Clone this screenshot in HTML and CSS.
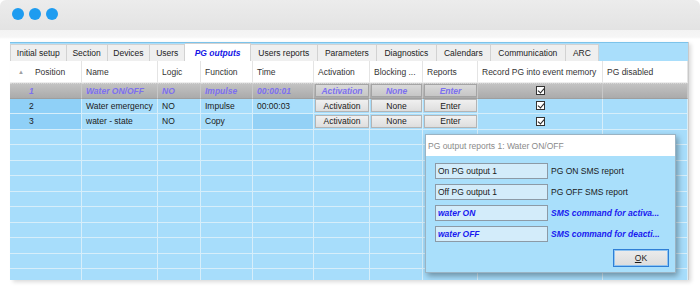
FILE: index.html
```html
<!DOCTYPE html>
<html lang="en">
<head>
  <meta charset="UTF-8" />
  <title>PG outputs</title>
  <link rel="stylesheet" href="styles.css">
</head>
<body>
  <div class="window">
    <div class="titlebar">
      <span class="dot"></span>
      <span class="dot"></span>
      <span class="dot"></span>
    </div>

    <div class="frame">
      <div class="panel">
        <div class="tabs">
          <span class="tab narrow">Initial setup</span>
          <span class="tab narrow">Section</span>
          <span class="tab narrow">Devices</span>
          <span class="tab narrow">Users</span>
          <span class="tab active">PG outputs</span>
          <span class="tab">Users reports</span>
          <span class="tab">Parameters</span>
          <span class="tab">Diagnostics</span>
          <span class="tab">Calendars</span>
          <span class="tab">Communication</span>
          <span class="tab">ARC</span>
        </div>

        <div class="grid">
          <div class="row head">
            <div class="cell pos"><span class="sort">▲</span>Position</div>
            <div class="cell">Name</div>
            <div class="cell">Logic</div>
            <div class="cell">Function</div>
            <div class="cell">Time</div>
            <div class="cell">Activation</div>
            <div class="cell">Blocking ...</div>
            <div class="cell">Reports</div>
            <div class="cell">Record PG into event memory</div>
            <div class="cell">PG disabled</div>
          </div>

          <div class="row selected">
            <div class="cell pos">1</div>
            <div class="cell">Water ON/OFF</div>
            <div class="cell">NO</div>
            <div class="cell">Impulse</div>
            <div class="cell">00:00:01</div>
            <div class="cell"><span class="btn">Activation</span></div>
            <div class="cell"><span class="btn">None</span></div>
            <div class="cell"><span class="btn">Enter</span></div>
            <div class="cell center"><span class="check"></span></div>
            <div class="cell"></div>
          </div>

          <div class="row">
            <div class="cell pos">2</div>
            <div class="cell">Water emergency</div>
            <div class="cell">NO</div>
            <div class="cell">Impulse</div>
            <div class="cell">00:00:03</div>
            <div class="cell"><span class="btn">Activation</span></div>
            <div class="cell"><span class="btn">None</span></div>
            <div class="cell"><span class="btn">Enter</span></div>
            <div class="cell center"><span class="check"></span></div>
            <div class="cell"></div>
          </div>

          <div class="row">
            <div class="cell pos">3</div>
            <div class="cell">water - state</div>
            <div class="cell">NO</div>
            <div class="cell">Copy</div>
            <div class="cell disabled"></div>
            <div class="cell"><span class="btn">Activation</span></div>
            <div class="cell"><span class="btn">None</span></div>
            <div class="cell"><span class="btn">Enter</span></div>
            <div class="cell center"><span class="check"></span></div>
            <div class="cell"></div>
          </div>

          <div class="row empty"><div class="cell"></div><div class="cell"></div><div class="cell"></div><div class="cell"></div><div class="cell"></div><div class="cell"></div><div class="cell"></div><div class="cell"></div><div class="cell"></div><div class="cell"></div></div>
          <div class="row empty"><div class="cell"></div><div class="cell"></div><div class="cell"></div><div class="cell"></div><div class="cell"></div><div class="cell"></div><div class="cell"></div><div class="cell"></div><div class="cell"></div><div class="cell"></div></div>
          <div class="row empty"><div class="cell"></div><div class="cell"></div><div class="cell"></div><div class="cell"></div><div class="cell"></div><div class="cell"></div><div class="cell"></div><div class="cell"></div><div class="cell"></div><div class="cell"></div></div>
          <div class="row empty"><div class="cell"></div><div class="cell"></div><div class="cell"></div><div class="cell"></div><div class="cell"></div><div class="cell"></div><div class="cell"></div><div class="cell"></div><div class="cell"></div><div class="cell"></div></div>
          <div class="row empty"><div class="cell"></div><div class="cell"></div><div class="cell"></div><div class="cell"></div><div class="cell"></div><div class="cell"></div><div class="cell"></div><div class="cell"></div><div class="cell"></div><div class="cell"></div></div>
          <div class="row empty"><div class="cell"></div><div class="cell"></div><div class="cell"></div><div class="cell"></div><div class="cell"></div><div class="cell"></div><div class="cell"></div><div class="cell"></div><div class="cell"></div><div class="cell"></div></div>
          <div class="row empty"><div class="cell"></div><div class="cell"></div><div class="cell"></div><div class="cell"></div><div class="cell"></div><div class="cell"></div><div class="cell"></div><div class="cell"></div><div class="cell"></div><div class="cell"></div></div>
          <div class="row empty"><div class="cell"></div><div class="cell"></div><div class="cell"></div><div class="cell"></div><div class="cell"></div><div class="cell"></div><div class="cell"></div><div class="cell"></div><div class="cell"></div><div class="cell"></div></div>
          <div class="row empty"><div class="cell"></div><div class="cell"></div><div class="cell"></div><div class="cell"></div><div class="cell"></div><div class="cell"></div><div class="cell"></div><div class="cell"></div><div class="cell"></div><div class="cell"></div></div>
          <div class="row empty"><div class="cell"></div><div class="cell"></div><div class="cell"></div><div class="cell"></div><div class="cell"></div><div class="cell"></div><div class="cell"></div><div class="cell"></div><div class="cell"></div><div class="cell"></div></div>
        </div>

        <div class="dialog">
          <div class="dialog-title">PG output reports 1: Water ON/OFF</div>
          <div class="dialog-body">
            <div class="field-row">
              <span class="field">On PG output 1</span>
              <span class="label">PG ON SMS report</span>
            </div>
            <div class="field-row">
              <span class="field">Off PG output 1</span>
              <span class="label">PG OFF SMS report</span>
            </div>
            <div class="field-row cmd">
              <span class="field">water ON</span>
              <span class="label">SMS command for activa...</span>
            </div>
            <div class="field-row cmd">
              <span class="field">water OFF</span>
              <span class="label">SMS command for deacti...</span>
            </div>
            <div class="actions">
              <span class="ok"><u>O</u>K</span>
            </div>
          </div>
        </div>
      </div>
    </div>
  </div>
</body>
</html>
```

FILE: styles.css
```css
* {
  box-sizing: border-box;
}

body {
  margin: 0;
  background-color: #ffffff;
  font-family: "Liberation Sans", Arial, sans-serif;
  font-size: 8.5px;
  color: #1a1a1a;
}

.window {
  width: 700px;
  height: 292px;
  overflow: hidden;
}

.titlebar {
  height: 30px;
  background: linear-gradient(#ececec, #e3e3e3);
  border-radius: 6px 6px 0 0;
  display: flex;
  align-items: center;
  gap: 5px;
  padding-left: 12px;
  padding-bottom: 2px;
}

.dot {
  width: 12px;
  height: 12px;
  border-radius: 50%;
  background-color: #1e9cf0;
}

.frame {
  height: 262px;
  background: linear-gradient(#f3f3f3 0, #f6f6f6 7px, #ffffff 9px);
  padding: 12px 12px 0 10px;
}

.panel {
  position: relative;
  width: 678px;
  height: 238px;
  overflow: hidden;
  background-color: #a7ddfb;
  border-top: 1px solid #7cc3ea;
  box-shadow: 1px 0 0 #c9c9c9, 3px 2px 4px rgba(0, 0, 0, 0.15);
}

/* tabs */
.tabs {
  height: 18px;
  display: flex;
  align-items: flex-end;
  background-color: #a9defb;
  padding-top: 1px;
}

.tab {
  height: 17px;
  display: flex;
  align-items: center;
  padding: 0 7.3px;
  background-color: #efefef;
  border: 1px solid #d2d2d2;
  border-bottom: none;
  border-left: none;
  color: #222;
}

.tab.narrow {
  padding: 0 5.8px;
}

.tab:first-child {
  border-left: 1px solid #d2d2d2;
}

.tab.active {
  height: 18px;
  background-color: #ffffff;
  color: #1414e6;
  font-style: italic;
  font-weight: 700;
  padding: 0 9.5px;
}

/* grid */
.grid {
  display: flex;
  flex-direction: column;
}

.row {
  display: grid;
  grid-template-columns: 72px 76px 43px 52px 61px 56px 53px 55px 125px 85px;
  height: 15.5px;
  background-color: #a7ddfb;
}

.cell {
  display: flex;
  align-items: center;
  padding-left: 4px;
  border-right: 1px solid #d6eefa;
  border-bottom: 1px solid #d6eefa;
  white-space: nowrap;
  overflow: hidden;
}

.cell.center {
  justify-content: center;
  padding-left: 0;
}

.row .pos {
  padding-left: 19px;
  background-color: #8fd0f7;
}

.row.empty .cell {
  background-color: #a7ddfb;
}

.cell.disabled {
  background-color: #93d1f6;
}

.row.head {
  height: 22px;
  background-color: #ffffff;
  color: #333;
}

.row.head .cell {
  background-color: #ffffff;
  border-right: 1px solid #e4e4e4;
  border-bottom: 1px solid #ededed;
}

.row.head .pos {
  padding-left: 8px;
}

.sort {
  font-size: 6px;
  color: #a0a0a0;
  margin-right: 11px;
}

.btn {
  flex: 1;
  height: 13px;
  margin-left: -3px;
  display: flex;
  align-items: center;
  justify-content: center;
  background: linear-gradient(#f0f0f0, #dedede);
  border: 1px solid #b4b4b4;
  color: #1a1a1a;
}

.row.selected {
  background: linear-gradient(#c4c4c4, #a9a9a9);
  color: #7c6ff0;
  font-style: italic;
  font-weight: 700;
}

.row.selected .cell {
  border-top: 1px dotted #d8d8d8;
  border-right: 1px solid #c8c8c8;
  border-bottom: 1px solid #9e9e9e;
}

.row.selected .pos {
  background: transparent;
}

.row.selected .btn {
  background: linear-gradient(#d9d9d9, #c6c6c6);
  border-color: #a4a4a4;
  color: #7c6ff0;
}

.check {
  width: 9px;
  height: 9px;
  border: 1px solid #333;
  background-color: #ffffff;
  position: relative;
}

.check::after {
  content: "";
  position: absolute;
  left: 2px;
  top: 0;
  width: 3px;
  height: 5px;
  border: solid #222;
  border-width: 0 1px 1px 0;
  transform: rotate(40deg);
}

/* dialog over the grid */
.dialog {
  position: absolute;
  left: 415px;
  top: 91px;
  width: 251px;
  height: 139px;
  background-color: #a9dffb;
  border: 1px solid #9ab3c3;
  box-shadow: 2px 3px 6px rgba(0, 0, 0, 0.35);
  display: flex;
  flex-direction: column;
}

.dialog-title {
  height: 21px;
  background-color: #ffffff;
  color: #8a8a8a;
  display: flex;
  align-items: center;
  padding-left: 2px;
  font-size: 8.5px;
}

.dialog-body {
  padding: 7px 0 0 9px;
  display: flex;
  flex-direction: column;
  gap: 5px;
}

.field-row {
  display: flex;
  align-items: center;
  gap: 3px;
}

.field {
  width: 113px;
  height: 16px;
  display: flex;
  align-items: center;
  padding-left: 2px;
  background-color: #d3ecfa;
  border: 1px solid #8c9aa6;
  color: #1a1a1a;
}

.label {
  color: #1a1a1a;
}

.field-row.cmd .field,
.field-row.cmd .label {
  color: #1818f0;
  font-style: italic;
  font-weight: 700;
}

.actions {
  display: flex;
  justify-content: flex-end;
  padding-right: 6px;
  margin-top: 2px;
}

.ok {
  width: 56px;
  height: 18px;
  display: flex;
  align-items: center;
  justify-content: center;
  background: linear-gradient(#ececec, #dcdcdc);
  border: 1px solid #2f7fd6;
  box-shadow: inset 0 0 0 1px #8fc3f0;
  color: #1a1a1a;
}
```
